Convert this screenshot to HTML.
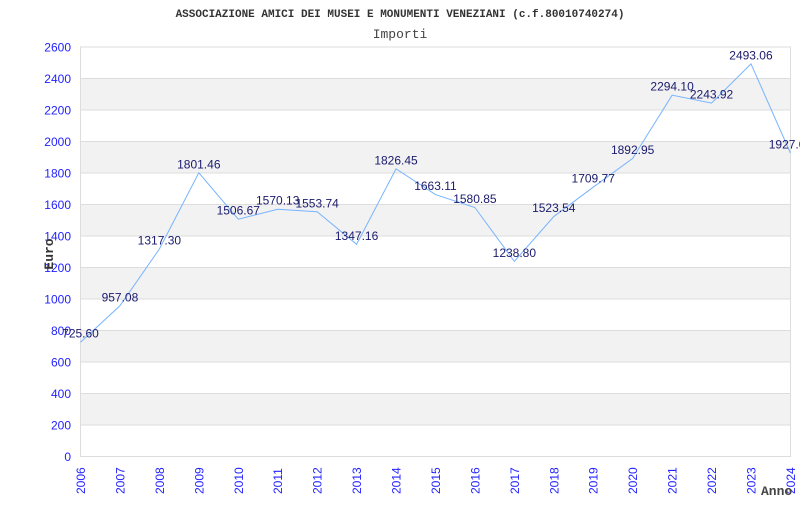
<!DOCTYPE html><html><head><style>body{margin:0;background:#fff}</style></head><body>
<svg width="800" height="500" xmlns="http://www.w3.org/2000/svg" font-family="Liberation Sans, sans-serif">
<text x="400" y="17" text-anchor="middle" font-family="Liberation Mono, monospace" font-size="11" font-weight="bold" fill="#333">ASSOCIAZIONE AMICI DEI MUSEI E MONUMENTI VENEZIANI (c.f.80010740274)</text>
<text x="400" y="38" text-anchor="middle" font-family="Liberation Mono, monospace" font-size="13" fill="#444">Importi</text>
<g id="bands"></g>
<g id="grid"></g>
<rect x="80.5" y="47" width="710" height="409.5" fill="none" stroke="#ddd"/>
<g id="ylab" fill="#2222ff" font-size="12" text-anchor="end"></g>
<g id="xlab" fill="#2222ff" font-size="12"></g>
<polyline id="ln" fill="none" stroke="#77b4ff" stroke-width="1"/>
<g id="dl" fill="#1a1a6e" font-size="12" text-anchor="middle"></g>
<text transform="translate(53,254) rotate(-90)" text-anchor="middle" font-family="Liberation Mono, monospace" font-size="13" font-weight="bold" fill="#333">Euro</text>
<text x="761" y="495" font-family="Liberation Mono, monospace" font-size="13" font-weight="bold" fill="#444">Anno</text>
</svg>
<script>
const ns="http://www.w3.org/2000/svg";
const Y=v=>456.5-v*409.5/2600, X=i=>80.5+i*39.44;
function el(t,a,p,txt){const e=document.createElementNS(ns,t);for(const k in a)e.setAttribute(k,a[k]);if(txt!=null)e.textContent=txt;document.getElementById(p).appendChild(e);}
for(let v=200;v<2600;v+=400){el('rect',{x:80.5,y:Y(v+200),width:710,height:Y(v)-Y(v+200),fill:'#f2f2f2'},'bands');}
for(let v=0;v<=2600;v+=200){el('line',{x1:80.5,x2:790.5,y1:Y(v),y2:Y(v),stroke:'#ddd'},'grid');el('text',{x:71,y:Y(v)+4.5},'ylab',v);}
const d=[725.60,957.08,1317.30,1801.46,1506.67,1570.13,1553.74,1347.16,1826.45,1663.11,1580.85,1238.80,1523.54,1709.77,1892.95,2294.10,2243.92,2493.06,1927.00];
let pts=[];
d.forEach((v,i)=>{pts.push(X(i)+','+Y(v));el('text',{x:X(i),y:Y(v)-4.5},'dl',v.toFixed(2));
el('text',{transform:`translate(${X(i)+4.5},494) rotate(-90)`},'xlab',2006+i);});
document.getElementById('ln').setAttribute('points',pts.join(' '));
</script>
</body></html>
